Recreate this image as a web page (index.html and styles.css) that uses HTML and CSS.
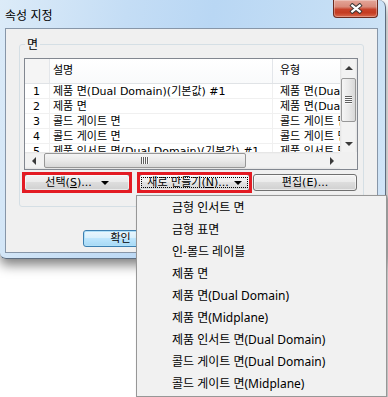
FILE: index.html
```html
<!DOCTYPE html>
<html lang="ko">
<head>
	<meta charset="UTF-8">
	<title>속성 지정</title>
	<link rel="stylesheet" href="styles.css">
</head>
<body>
<div class="window">
	<div class="titlebar">
		<span class="title">속성 지정</span>
		<span class="close">
			<svg width="14" height="11" viewBox="0 0 14 11">
				<path d="M1.8 1.2 L12.2 9.8 M12.2 1.2 L1.8 9.8" stroke="#3b3634" stroke-width="4.2"/>
				<path d="M2.4 1.8 L11.6 9.2 M11.6 1.8 L2.4 9.2" stroke="#fff" stroke-width="2.2"/>
			</svg>
		</span>
	</div>
	<div class="client">
		<fieldset class="group">
			<legend>면</legend>
			<div class="list">
				<div class="view">
					<div class="head">
						<span class="c1"></span>
						<span class="c2">설명</span>
						<span class="c3">유형</span>
					</div>
					<div class="row">
						<span class="c1">1</span>
						<span class="c2">제품 면(Dual Domain)(기본값) #1</span>
						<span class="c3">제품 면(Dual Domain)</span>
					</div>
					<div class="row">
						<span class="c1">2</span>
						<span class="c2">제품 면</span>
						<span class="c3">제품 면(Dual Domain)</span>
					</div>
					<div class="row">
						<span class="c1">3</span>
						<span class="c2">콜드 게이트 면</span>
						<span class="c3">콜드 게이트 면(Dual Domain)</span>
					</div>
					<div class="row">
						<span class="c1">4</span>
						<span class="c2">콜드 게이트 면</span>
						<span class="c3">콜드 게이트 면(Dual Domain)</span>
					</div>
					<div class="row">
						<span class="c1">5</span>
						<span class="c2">제품 인서트 면(Dual Domain)(기본값) #1</span>
						<span class="c3">제품 인서트 면(Dual Domain)</span>
					</div>
				</div>
				<div class="vscroll">
					<div class="sbtn"><i class="tri-up"></i></div>
					<div class="vthumb"><i class="grip-h"></i></div>
					<div class="spacer"></div>
					<div class="sbtn"><i class="tri-down"></i></div>
				</div>
				<div class="hscroll">
					<div class="sbtn"><i class="tri-left"></i></div>
					<div class="hthumb"><i class="grip-v"></i></div>
					<div class="spacer"></div>
					<div class="sbtn"><i class="tri-right"></i></div>
				</div>
				<div class="corner"></div>
			</div>
			<div class="btns">
				<button class="btn b-sel mark">선택(<u>S</u>)...<i class="drop"></i></button>
				<button class="btn b-new mark"><span class="focus">새로 만들기(<u>N</u>)...<i class="drop"></i></span></button>
				<button class="btn b-edit">편집(E)...</button>
			</div>
		</fieldset>
		<div class="footer">
			<button class="btn ok">확인</button>
		</div>
	</div>
</div>

<ul class="menu">
	<li>금형 인서트 면</li>
	<li>금형 표면</li>
	<li>인-몰드 레이블</li>
	<li>제품 면</li>
	<li>제품 면(Dual Domain)</li>
	<li>제품 면(Midplane)</li>
	<li>제품 인서트 면(Dual Domain)</li>
	<li>콜드 게이트 면(Dual Domain)</li>
	<li>콜드 게이트 면(Midplane)</li>
</ul>
</body>
</html>
```

FILE: styles.css
```css
*{
	box-sizing: border-box;
}
body{
	margin: 0;
	width: 388px;
	height: 397px;
	overflow: hidden;
	position: relative;
	background: #fff;
	font-family: "DejaVu Sans", "Noto Sans CJK KR", sans-serif;
	font-size: 11px;
	color: #000;
}
i{
	font-style: normal;
}

/* 창 틀 */
.window{
	width: 386px;
	height: 259px;
	padding: 0 7px 5px 5px;
	background: linear-gradient(100deg, #dcebf8 0%, #c4ddf5 30%, #b9d7f4 50%, #c6dff5 80%, #d2e5f7 100%);
	border-right: 1px solid #5d6d80;
	border-bottom: 1px solid #5d6d80;
	border-radius: 0 7px 6px 6px;
	box-shadow: 0 6px 12px rgba(0,0,0,.5);
}
.titlebar{
	display: flex;
	justify-content: space-between;
	height: 28px;
}
.title{
	font-family: "Noto Sans CJK KR", sans-serif;
	font-size: 12px;
	line-height: 16px;
	padding-top: 7px;
}
.close{
	width: 45px;
	height: 18px;
	border: 1px solid #6b2b20;
	border-top: 0;
	border-radius: 0 0 4px 4px;
	background: linear-gradient(#e4a699 0%, #d98a7a 40%, #c8432b 55%, #c43c22 75%, #d9694d 100%);
	box-shadow: inset 0 0 0 1px rgba(255,255,255,.3);
	display: flex;
	align-items: center;
	justify-content: center;
}
.client{
	height: 225px;
	background: #f0f0f0;
	border: 1px solid #8796a8;
	display: flex;
	flex-direction: column;
}

/* 그룹 상자 */
.group{
	margin: 8px 13px 0 13px;
	padding: 7px 5px 15px 4px;
	border: 1px solid #d5dfe5;
	border-radius: 3px;
	min-width: 0;
}
.group legend{
	font-family: "Noto Sans CJK KR", sans-serif;
	font-size: 12px;
	line-height: 14px;
	padding: 0 2px;
	margin-left: 1px;
}

/* 목록 */
.list{
	height: 112px;
	border: 1px solid #828790;
	background: #fff;
	display: grid;
	grid-template-columns: 1fr 17px;
	grid-template-rows: 1fr 17px;
}
.view{
	overflow: hidden;
}
.head,.row{
	display: flex;
	white-space: nowrap;
}
.head{
	height: 25px;
	line-height: 24px;
	border-bottom: 1px solid #e0e3e6;
	background: linear-gradient(#fff, #f9fafb);
}
.head span{
	border-right: 1px solid #e3e6ea;
}
.head .c1{
	background: #f5f5f5;
}
.row{
	height: 15px;
	line-height: 15px;
	border-bottom: 1px solid #f0f0f0;
}
.row span{
	border-right: 1px solid #f0f0f0;
}
.c1,.c2,.c3{
	flex: none;
	overflow: hidden;
}
.c1{
	width: 25px;
	padding-left: 8px;
}
.c2{
	width: 223px;
	padding-left: 3px;
}
.c3{
	width: 100px;
	padding-left: 7px;
}

/* 스크롤바 */
.vscroll,.hscroll{
	display: flex;
}
.vscroll{
	flex-direction: column;
	background: linear-gradient(to right, #e2e2e2, #f2f2f2 2px, #f2f2f2 15px, #e2e2e2);
}
.hscroll{
	background: linear-gradient(#e2e2e2, #f2f2f2 2px, #f2f2f2 15px, #e2e2e2);
}
.corner{
	background: #f0f0f0;
}
.sbtn{
	flex: none;
	width: 17px;
	height: 17px;
	display: flex;
	align-items: center;
	justify-content: center;
}
.vscroll .sbtn{
	width: auto;
}
.spacer{
	flex: 1;
}
.tri-up,.tri-down,.tri-left,.tri-right{
	width: 0;
	height: 0;
	border: 4px solid transparent;
}
.tri-up{
	border-bottom-color: #3a3a3a;
	border-top-width: 0;
}
.tri-down{
	border-top-color: #3a3a3a;
	border-bottom-width: 0;
}
.tri-left{
	border-right-color: #3a3a3a;
	border-left-width: 0;
}
.tri-right{
	border-left-color: #3a3a3a;
	border-right-width: 0;
}
.vthumb,.hthumb{
	flex: none;
	border: 1px solid #979797;
	border-radius: 2px;
	display: flex;
	align-items: center;
	justify-content: center;
}
.vthumb{
	height: 44px;
	margin: 2px 1px 0;
	background: linear-gradient(to right, #f5f5f5, #e9e9e9 50%, #d8d8d8);
}
.hthumb{
	width: 202px;
	margin: 1px 0 1px 2px;
	background: linear-gradient(#f5f5f5, #e9e9e9 50%, #d8d8d8);
}
.grip-h{
	width: 7px;
	height: 8px;
	background: repeating-linear-gradient(#5f5f5f 0 1px, #fafafa 1px 2px);
}
.grip-v{
	width: 8px;
	height: 7px;
	background: repeating-linear-gradient(to right, #5f5f5f 0 1px, #fafafa 1px 2px);
}

/* 버튼 */
.btns{
	display: flex;
	margin-top: 4px;
}
.btn{
	height: 17px;
	padding: 0;
	border: 1px solid #707070;
	border-radius: 3px;
	background: linear-gradient(#f3f3f3 0%, #ebebeb 45%, #dddddd 50%, #d0d0d0 100%);
	box-shadow: inset 0 0 0 1px rgba(255,255,255,.55);
	font-family: "DejaVu Sans", "Noto Sans CJK KR", sans-serif;
	font-size: 11px;
	line-height: 13px;
	color: #000;
	display: flex;
	align-items: center;
	justify-content: center;
}
.btn u{
	text-decoration: underline;
}
/* 빨간 표시 상자 */
.mark{
	position: relative;
}
.mark::after{
	content: '';
	position: absolute;
	top: -3px;
	right: -3px;
	bottom: -3px;
	left: -3px;
	border: 3px solid #e31b23;
}
.b-sel{
	width: 106px;
}
.b-new{
	width: 111px;
	margin-left: 9px;
	background: linear-gradient(#f6f6f6 0%, #eeeeee 45%, #e2e2e2 50%, #d6d6d6 100%);
}
.b-edit{
	width: 104px;
	margin-left: 3px;
}
.focus{
	flex: 1;
	align-self: stretch;
	margin: 2px 1px;
	border: 1px dotted #000;
	display: flex;
	align-items: center;
	justify-content: center;
}
.drop{
	width: 0;
	height: 0;
	margin-left: 9px;
	border-left: 4px solid transparent;
	border-right: 4px solid transparent;
	border-top: 4px solid #000;
}
.b-new .drop{
	margin-left: 5px;
}
.footer{
	display: flex;
	margin-top: 23px;
	padding-left: 77px;
}
.footer .btn{
	width: 75px;
}
.btn.ok{
	border-color: #3c7fb1;
	background: linear-gradient(#eaf6fd 0%, #d9f0fc 45%, #bee6fd 50%, #a7d9f5 100%);
	box-shadow: inset 0 0 0 1px #b0e0f8;
}

/* 드롭다운 메뉴 */
.menu{
	position: absolute;
	left: 136px;
	top: 195px;
	width: 251px;
	height: 202px;
	margin: 0;
	padding: 1px 0;
	list-style: none;
	background: #f1f1f1;
	border: 1px solid #979797;
	box-shadow: 2px 2px 3px rgba(0,0,0,.3);
	font-family: "Noto Sans", "Noto Sans CJK KR", sans-serif;
	font-size: 12px;
}
.menu li{
	height: 22px;
	line-height: 22px;
	padding-left: 35px;
	white-space: nowrap;
}
```
